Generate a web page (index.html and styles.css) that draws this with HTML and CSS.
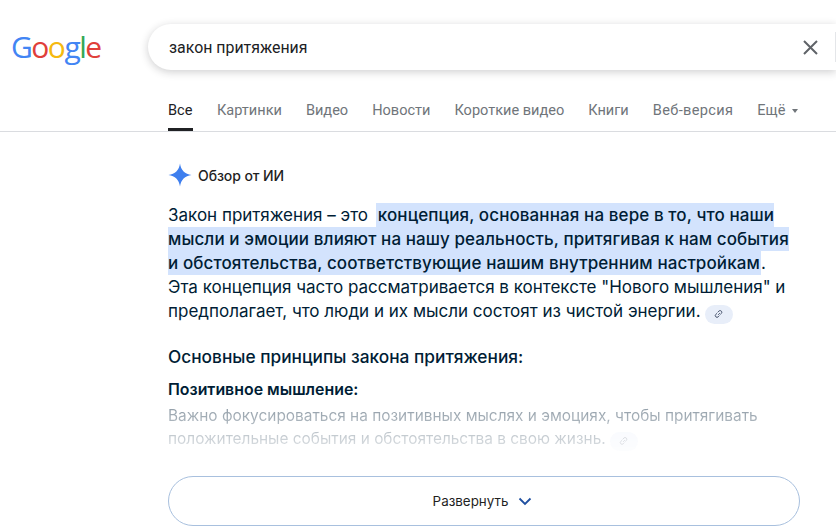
FILE: index.html
```html
<!DOCTYPE html>
<html lang="ru">
<head>
<meta charset="utf-8">
<title>закон притяжения</title>
<link rel="stylesheet" href="styles.css">
</head>
<body>
<header class="top">
  <div class="logo"><span class="b">G</span><span class="r">o</span><span class="y">o</span><span class="b">g</span><span class="g">l</span><span class="r">e</span></div>
  <div class="search">
    <span class="query">закон притяжения</span>
    <svg class="clear" width="15" height="15" viewBox="0 0 15 15"><path d="M1 1 14 14M14 1 1 14" stroke="#5f6368" stroke-width="2" fill="none"/></svg>
    <span class="divider"></span>
  </div>
</header>
<nav class="tabs">
  <a class="tab active">Все</a>
  <a class="tab">Картинки</a>
  <a class="tab">Видео</a>
  <a class="tab">Новости</a>
  <a class="tab">Короткие видео</a>
  <a class="tab">Книги</a>
  <a class="tab wide">Веб-версия</a>
  <a class="tab">Ещё <i class="caret"></i></a>
</nav>
<main class="main">
  <div class="ai-head">
    <svg width="24" height="24" viewBox="0 0 24 24"><path d="M12 0.5C12.8 7 17 11.2 23.5 12 17 12.8 12.8 17 12 23.5 11.2 17 7 12.8 0.5 12 7 11.2 11.2 7 12 0.5Z" fill="#3f7fee"/></svg>
    <span>Обзор от ИИ</span>
  </div>
  <p class="lead">Закон притяжения – это <mark>концепция, основанная на вере в то, что наши мысли и эмоции влияют на нашу реальность, притягивая к нам события и обстоятельства, соответствующие нашим внутренним настройкам</mark>. Эта концепция часто рассматривается в контексте "Нового мышления" и предполагает, что люди и их мысли состоят из чистой энергии. <span class="chip"><svg width="10" height="10" viewBox="0 0 10 10"><path d="M4.2 5.8 5.8 4.2M3.6 3.4 4.9 2.1a1.7 1.7 0 0 1 2.9 1.2 1.7 1.7 0 0 1-.5 1.2L6.4 5.4M5.4 6.6 4.2 7.8a1.7 1.7 0 0 1-2.4 0 1.7 1.7 0 0 1 0-2.4L2.9 4.4" stroke="#44506a" stroke-width="1" fill="none"/></svg></span></p>
  <h2 class="subhead">Основные принципы закона притяжения:</h2>
  <h3 class="item">Позитивное мышление:</h3>
  <div class="fade">
    <p class="body">Важно фокусироваться на позитивных мыслях и эмоциях, чтобы притягивать положительные события и обстоятельства в свою жизнь. <span class="chip"><svg width="10" height="10" viewBox="0 0 10 10"><path d="M4.2 5.8 5.8 4.2M3.6 3.4 4.9 2.1a1.7 1.7 0 0 1 2.9 1.2 1.7 1.7 0 0 1-.5 1.2L6.4 5.4M5.4 6.6 4.2 7.8a1.7 1.7 0 0 1-2.4 0 1.7 1.7 0 0 1 0-2.4L2.9 4.4" stroke="#44506a" stroke-width="1" fill="none"/></svg></span></p>
  </div>
  <button class="expand">Развернуть
    <svg width="14" height="9" viewBox="0 0 14 9"><path d="M1.5 1.5 7 7l5.5-5.5" stroke="#1f4fa0" stroke-width="1.8" fill="none"/></svg>
  </button>
</main>
</body>
</html>
```
FILE: styles.css
```css
* { box-sizing: border-box; }
html, body { margin: 0; height: 532px; overflow: hidden; background: #fff; }
body { font-family: Inter, "Noto Sans", sans-serif; color: #001d35; }
.top { display: flex; align-items: center; padding-top: 24px; height: 70px; }
.logo { width: 148px; padding-left: 11px; font-family: "Open Sans", sans-serif; font-weight: 500; font-size: 30px; line-height: 46px; letter-spacing: -1.5px; }
.b { color: #4285f4; } .r { color: #e0403a; } .y { color: #f5b90f; } .g { color: #34a853; }
.search { flex: 1; height: 46px; display: flex; align-items: center; padding-left: 21px; background: #fff; border-radius: 24px 0 0 24px; box-shadow: 0 2px 8px rgba(32,33,36,.22); }
.query { flex: 1; font: 15.9px Roboto, sans-serif; color: #202124; }
.clear { margin-right: 17px; }
.divider { width: 1px; height: 30px; background: #e4e6e9; }
.tabs { display: flex; gap: 24px; height: 62px; padding: 29px 0 0 168px; border-bottom: 1px solid #dadce0; font: 14.55px Roboto, sans-serif; color: #70757a; }
.tab { line-height: 24px; height: 32px; white-space: nowrap; }
.wide { letter-spacing: .35px; }
.active { min-width: 25px; color: #202124; border-bottom: 3px solid #202124; }
.caret { display: inline-block; margin-left: 3px; vertical-align: 2px; border: 3.5px solid transparent; border-top: 4px solid #70757a; border-bottom: 0; }
.main { width: 632px; margin-left: 168px; }
.ai-head { display: flex; align-items: center; gap: 6px; margin-top: 31px; height: 24px; font-size: 14px; letter-spacing: -.1px; font-weight: 450; color: #1f1f1f; }
.lead { margin: 16px 0 0; font-size: 17px; line-height: 24px; color: #001d35; }
mark { background: #d3e3fd; color: #001d35; font-weight: 500; letter-spacing: 0.1px; padding: 2px 1px 2px 2px; margin-left: 3px; }
.chip { display: inline-flex; align-items: center; justify-content: center; width: 28px; height: 19px; margin: -3px 0; border-radius: 10px; background: #e8eef9; vertical-align: -2px; }
.subhead { margin: 22px 0 0; font-size: 17.3px; line-height: 24px; font-weight: 500; color: #001d35; }
.item { margin: 9px 0 0; font-size: 15.9px; line-height: 24px; font-weight: 600; color: #001d35; }
.fade { margin-top: 2px; height: 47px; -webkit-mask-image: linear-gradient(to bottom, rgba(0,0,0,.45), rgba(0,0,0,.12)); mask-image: linear-gradient(to bottom, rgba(0,0,0,.45), rgba(0,0,0,.12)); }
.body { margin: 0; font-size: 15.42px; line-height: 23px; }
.expand { display: flex; align-items: center; justify-content: center; gap: 10px; width: 632px; height: 50px; margin-top: 25px; padding: 0 3px 0 0; background: #fff; border: 1px solid #a8c0de; border-radius: 25px; font: 400 13.4px Inter, sans-serif; color: #1f1f1f; }
```
